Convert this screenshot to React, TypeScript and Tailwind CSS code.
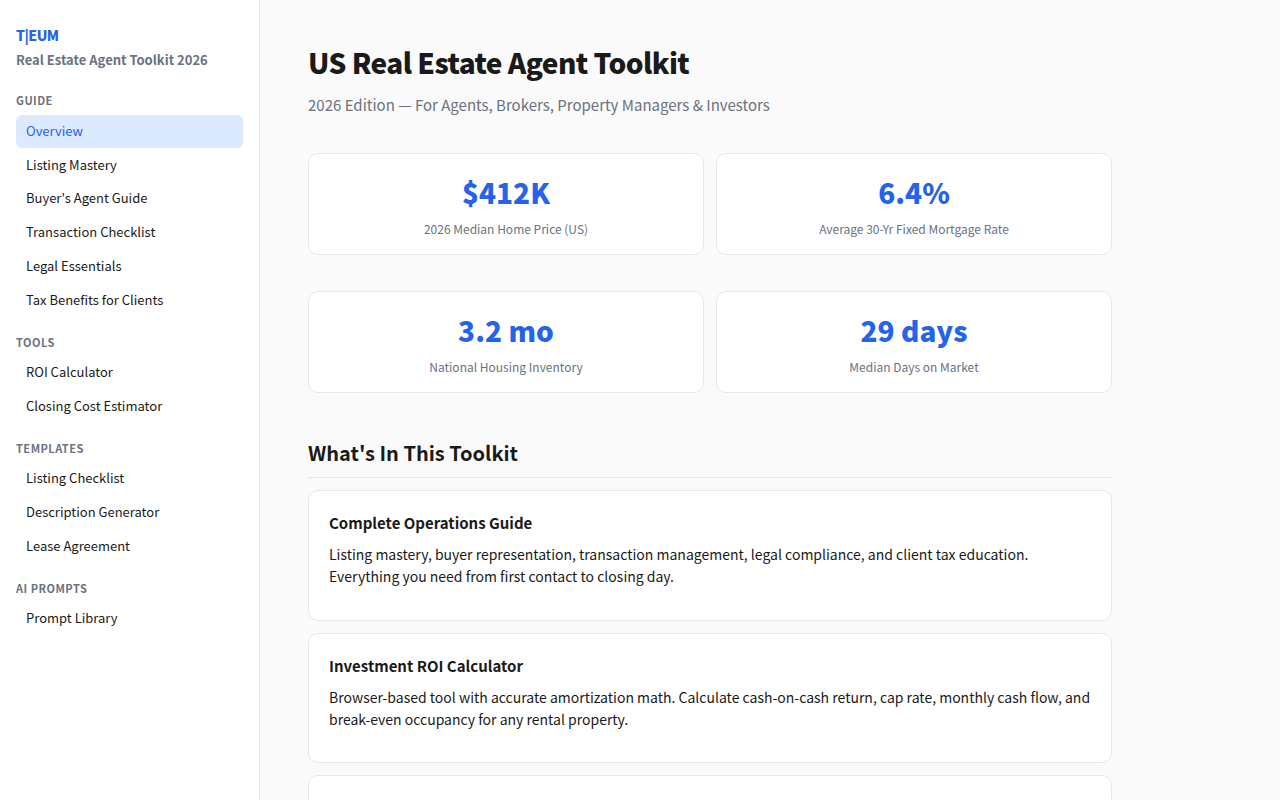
const font = { fontFamily: '"Noto Sans CJK KR", "Noto Sans CJK SC", sans-serif' };

const navGroups = [
  { title: "GUIDE", items: ["Overview", "Listing Mastery", "Buyer's Agent Guide", "Transaction Checklist", "Legal Essentials", "Tax Benefits for Clients"] },
  { title: "TOOLS", items: ["ROI Calculator", "Closing Cost Estimator"] },
  { title: "TEMPLATES", items: ["Listing Checklist", "Description Generator", "Lease Agreement"] },
  { title: "AI PROMPTS", items: ["Prompt Library"] },
];

const stats = [
  [
    { value: "$412K", label: "2026 Median Home Price (US)" },
    { value: "6.4%", label: "Average 30-Yr Fixed Mortgage Rate" },
  ],
  [
    { value: "3.2 mo", label: "National Housing Inventory" },
    { value: "29 days", label: "Median Days on Market" },
  ],
];

const cards = [
  {
    title: "Complete Operations Guide",
    text: "Listing mastery, buyer representation, transaction management, legal compliance, and client tax education. Everything you need from first contact to closing day.",
  },
  {
    title: "Investment ROI Calculator",
    text: "Browser-based tool with accurate amortization math. Calculate cash-on-cash return, cap rate, monthly cash flow, and break-even occupancy for any rental property.",
  },
  {
    title: "Closing Cost Estimator",
    text: "Estimate buyer and seller closing costs by state, with itemized fees and net proceeds.",
  },
];

export default function App() {
  return (
    <div className="flex h-screen overflow-hidden bg-[#fafafa] text-[#1a1a1a]" style={font}>
      <aside className="w-[260px] shrink-0 border-r border-[#e5e7eb] bg-white px-4 pt-6">
        <div className="pb-[3.9px]">
          <div className="text-[14px] leading-[23.4px] font-extrabold tracking-[-0.5px] text-[#2563eb]">T|EUM</div>
          <div className="mt-[3px] text-[13px] leading-[20.8px] font-bold text-[#6b7280]">Real Estate Agent Toolkit 2026</div>
        </div>
        {navGroups.map(group => (
          <div key={group.title} className="mt-[16.9px]">
            <div className={group.title === "GUIDE" ? "mb-[5px] text-[11px] leading-[17.6px] font-bold tracking-[0.5px] text-[#6b7280]" : "mb-1 text-[11px] leading-[17.6px] font-bold tracking-[0.5px] text-[#6b7280]"}>{group.title}</div>
            {group.items.map(item => (
              <div
                key={item}
                className={
                  item === "Overview"
                    ? "rounded-md bg-[#dbeafe] px-[10px] pt-[6.25px] pb-[6.75px] text-[13px] leading-[20.8px] text-[#2563eb]"
                    : "rounded-md px-[10px] pt-[6.25px] pb-[6.75px] text-[13px] leading-[20.8px] text-[#1a1a1a]"
                }
              >
                {item}
              </div>
            ))}
          </div>
        ))}
      </aside>
      <main className="flex-1 overflow-hidden">
        <div className="max-w-[900px] px-12 pt-10">
          <h1 className="text-[28px] leading-[44.8px] font-extrabold tracking-[-0.56px]">US Real Estate Agent Toolkit</h1>
          <p className="mt-2 text-[15px] leading-[24px] text-[#6b7280]">2026 Edition — For Agents, Brokers, Property Managers &amp; Investors</p>
          <div className="mt-9 flex flex-col gap-9">
            {stats.map((row, i) => (
              <div key={i} className="grid grid-cols-2 gap-3">
                {row.map(stat => (
                  <div key={stat.label} className="rounded-[10px] border border-[#e5e7eb] bg-white py-4 text-center">
                    <div className="text-[28px] leading-[44.8px] font-extrabold text-[#2563eb]">{stat.value}</div>
                    <div className="mt-1 text-[12px] leading-[19.2px] text-[#6b7280]">{stat.label}</div>
                  </div>
                ))}
              </div>
            ))}
          </div>
          <h2 className="mt-11 border-b border-[#e5e7eb] pb-2 text-[20px] leading-[32px] font-bold">What's In This Toolkit</h2>
          <div className="mt-3 flex flex-col gap-3">
            {cards.map(card => (
              <div key={card.title} className="rounded-[10px] border border-[#e5e7eb] bg-white p-5">
                <h3 className="mb-2 text-[15px] leading-[24px] font-bold">{card.title}</h3>
                <p className="mb-3 text-[14px] leading-[22.4px]">{card.text}</p>
              </div>
            ))}
          </div>
        </div>
      </main>
    </div>
  );
}
